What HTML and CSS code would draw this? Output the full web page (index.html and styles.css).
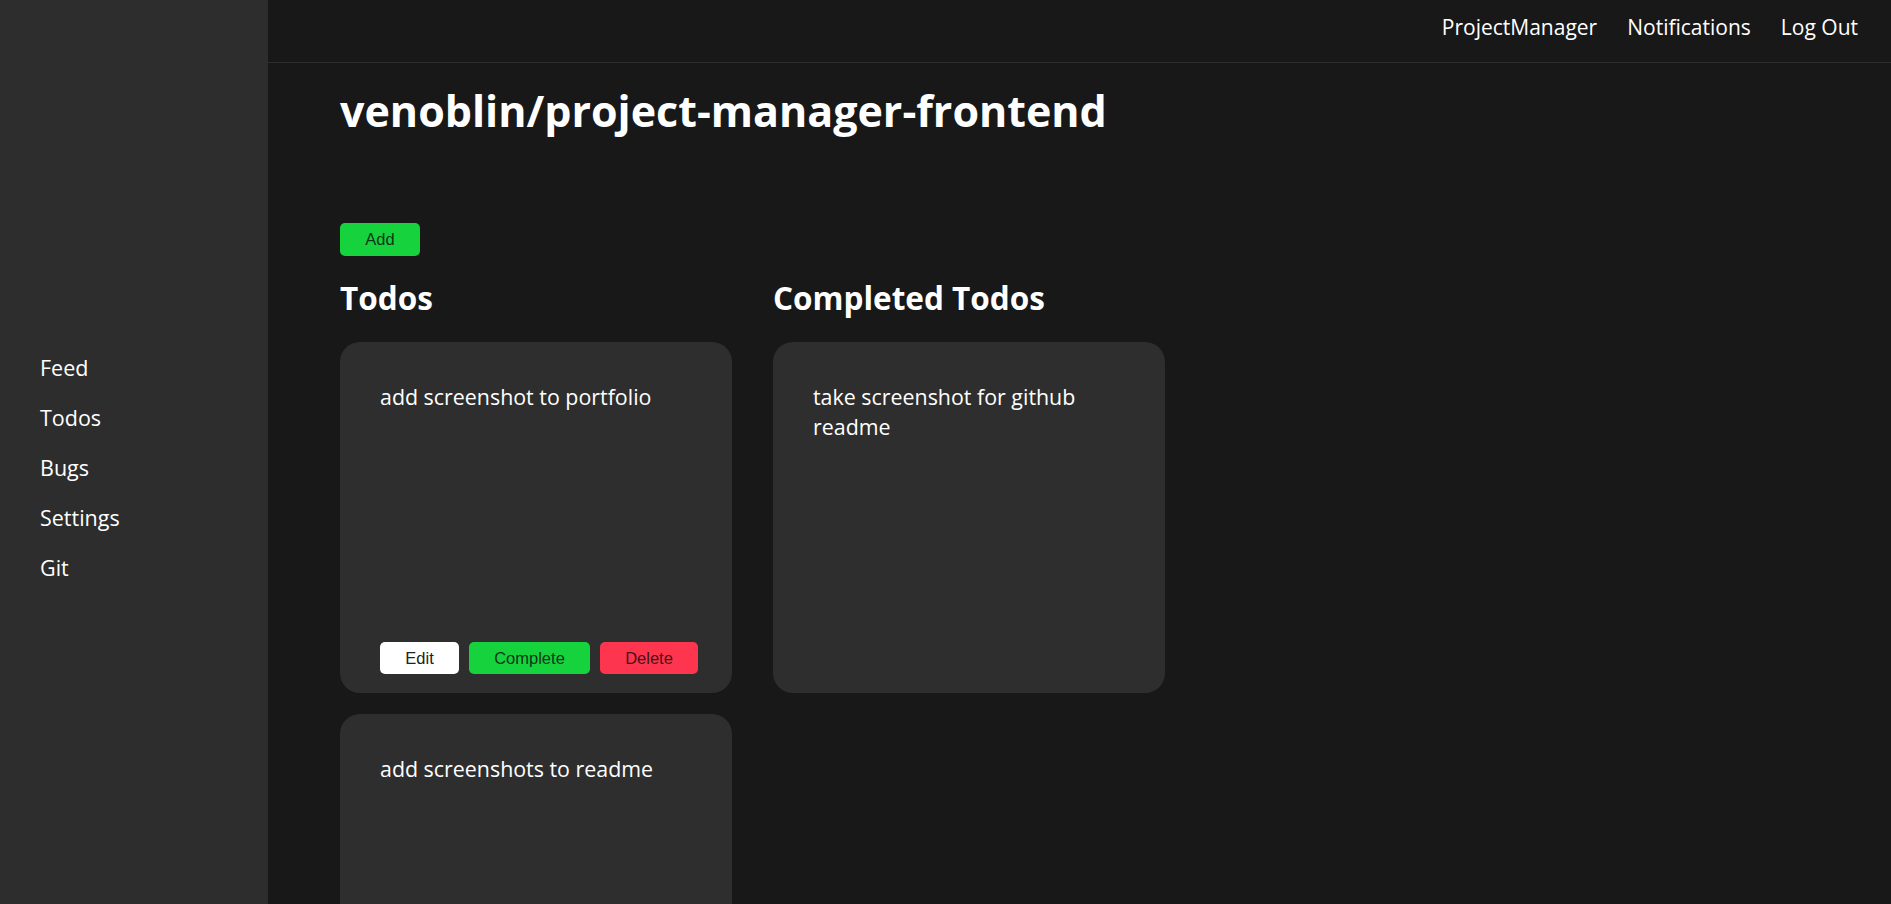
FILE: index.html
```html
<!DOCTYPE html>
<html lang="en">
<head>
<meta charset="utf-8">
<title>ProjectManager</title>
<link rel="stylesheet" href="styles.css">
</head>
<body>
<div class="app">
  <aside class="sidebar">
    <nav class="side-nav">
      <a class="side-link" href="#">Feed</a>
      <a class="side-link" href="#">Todos</a>
      <a class="side-link" href="#">Bugs</a>
      <a class="side-link" href="#">Settings</a>
      <a class="side-link" href="#">Git</a>
    </nav>
  </aside>
  <div class="main">
    <header class="topbar">
      <a class="top-link" href="#">ProjectManager</a>
      <a class="top-link" href="#">Notifications</a>
      <a class="top-link" href="#">Log Out</a>
    </header>
    <section class="content">
      <h1 class="repo-title">venoblin/project-manager-frontend</h1>
      <button class="btn btn-green btn-add">Add</button>
      <div class="columns">
        <div class="column">
          <h2 class="col-title">Todos</h2>
          <div class="card">
            <p class="card-text">add screenshot to portfolio</p>
            <div class="card-actions">
              <button class="btn btn-white btn-edit">Edit</button>
              <button class="btn btn-green btn-complete">Complete</button>
              <button class="btn btn-red btn-delete">Delete</button>
            </div>
          </div>
          <div class="card">
            <p class="card-text">add screenshots to readme</p>
          </div>
        </div>
        <div class="column">
          <h2 class="col-title">Completed Todos</h2>
          <div class="card">
            <p class="card-text">take screenshot for github readme</p>
          </div>
        </div>
      </div>
    </section>
  </div>
</div>
</body>
</html>
```
FILE: styles.css
```css
* { box-sizing: border-box; }
html, body {
  margin: 0;
  padding: 0;
  height: 100%;
  overflow: hidden;
  background: #181818;
}
body {
  font-family: "Open Sans", "Noto Sans", sans-serif;
  color: #ffffff;
}
a { color: inherit; text-decoration: none; }

.app {
  display: flex;
  height: 100vh;
  overflow: hidden;
}

.sidebar {
  width: 268px;
  flex: 0 0 268px;
  background: #2d2d2d;
  padding: 353px 0 0 40px;
}
.side-nav {
  display: flex;
  flex-direction: column;
  gap: 20px;
}
.side-link {
  font-size: 21.5px;
  line-height: 30px;
}

.main {
  flex: 1;
  min-width: 0;
  display: flex;
  flex-direction: column;
}

.topbar {
  height: 63px;
  flex: 0 0 63px;
  border-bottom: 1px solid #2e2e2e;
  display: flex;
  justify-content: flex-end;
  align-items: flex-start;
  gap: 30px;
  padding: 12px 33px 0 0;
}
.top-link {
  font-size: 21px;
  line-height: 30px;
}

.content {
  padding: 0 0 0 72px;
}
.repo-title {
  margin: 23px 0 0;
  font-size: 43px;
  line-height: 50px;
  font-weight: 700;
}

.btn {
  font-family: "Liberation Sans", Arial, sans-serif;
  font-size: 16.5px;
  border: none;
  border-radius: 5px;
  color: #1c1c1c;
  padding: 0;
  cursor: pointer;
  flex-shrink: 0;
}
.btn-green { background: #16d33d; color: #10361a; }
.btn-white { background: #ffffff; color: #222222; }
.btn-red { background: #fe354f; color: #4a0f17; }

.btn-add {
  display: block;
  margin-top: 87px;
  width: 80px;
  height: 33px;
}

.columns {
  display: flex;
  gap: 41px;
  align-items: flex-start;
}
.column {
  width: 392px;
  display: flex;
  flex-direction: column;
}
.col-title {
  margin: 24px 0 26px;
  font-size: 31.5px;
  line-height: 36px;
  font-weight: 700;
}

.card {
  height: 351px;
  background: #2e2e2e;
  border-radius: 20px;
  padding: 40px 40px 19px;
  display: flex;
  flex-direction: column;
  justify-content: space-between;
  margin-bottom: 21px;
}
.card-text {
  margin: 0;
  font-size: 21.4px;
  line-height: 30px;
}
.card-actions {
  display: flex;
  gap: 10px;
}
.btn-edit { width: 79px; height: 32px; }
.btn-complete { width: 121px; height: 32px; }
.btn-delete { width: 98px; height: 32px; }
```
